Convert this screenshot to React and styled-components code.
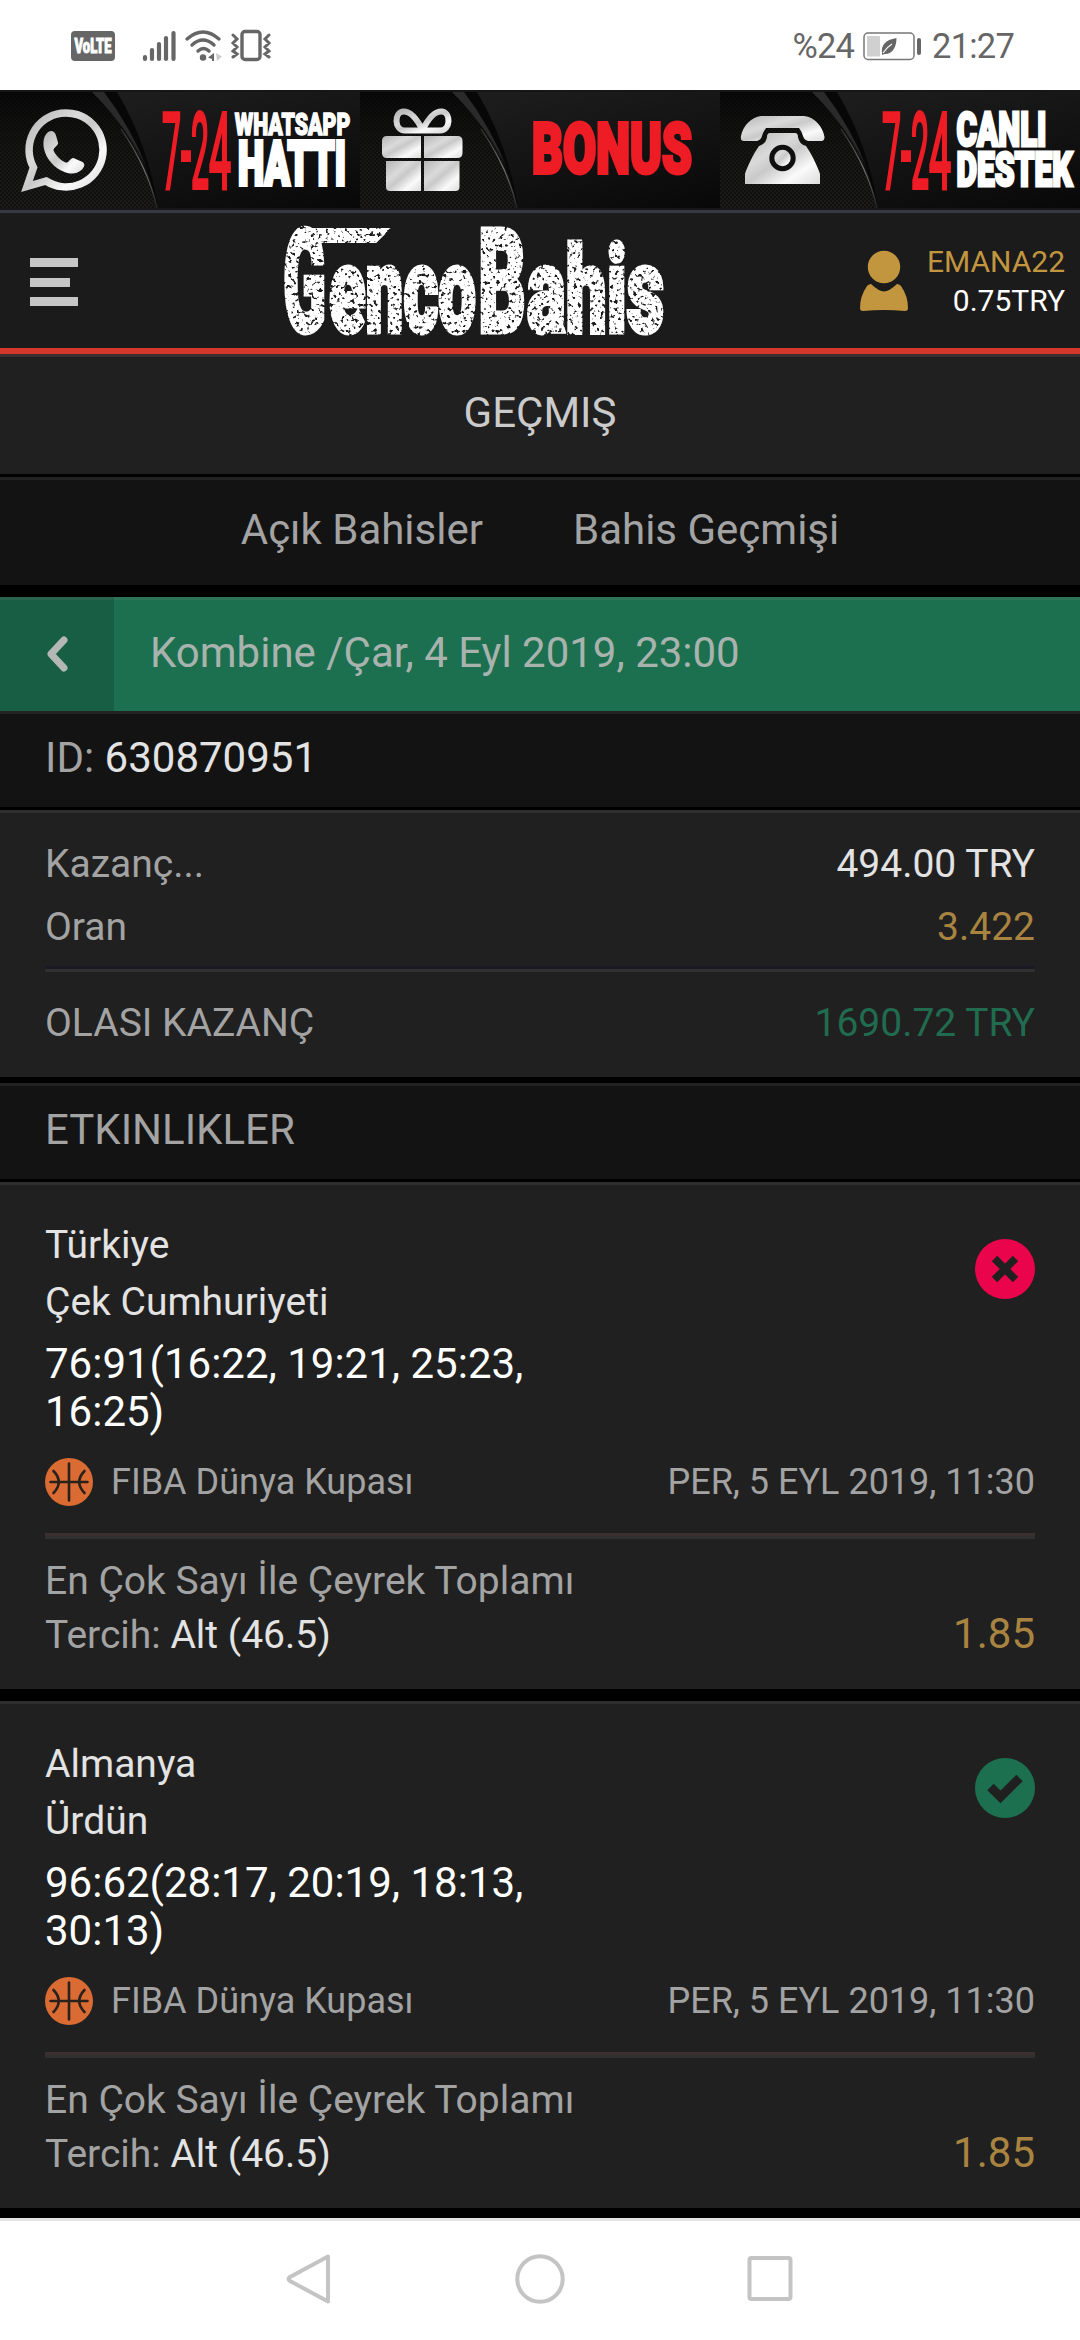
import React from "react";
import styled, { createGlobalStyle } from "styled-components";

const GlobalStyle = createGlobalStyle`
  body {
    margin: 0;
    background: #000;
    font-family: Roboto, "Liberation Sans", sans-serif;
    color: #a3a3a3;
  }
  svg {
    display: block;
    overflow: visible;
  }
`;

const Screen = styled.div`
  width: 1080px;
  height: 2340px;
  display: flex;
  flex-direction: column;
  overflow: hidden;
`;

const StatusBar = styled.div`
  box-sizing: border-box;
  height: 90px;
  flex: none;
  background: #fff;
  display: flex;
  justify-content: space-between;
  align-items: center;
  padding: 2px 66px 0 71px;
  color: #666;
  font-size: 34.5px;
  letter-spacing: -0.8px;

  .left,
  .right {
    display: flex;
    align-items: center;
  }
  .right {
    gap: 9px;
  }
`;

const Banner = styled.div`
  box-sizing: border-box;
  height: 123px;
  flex: none;
  display: flex;
  background: #161616;
  border-bottom: 3px solid #363842;
  padding-top: 2px;
`;

const Header = styled.header`
  box-sizing: border-box;
  height: 141px;
  flex: none;
  display: grid;
  grid-template-columns: 282px 384px 1fr;
  align-items: center;
  background: #1b1b1b;
  border-bottom: 6px solid #d6372b;
  padding-right: 15px;
`;

const MenuButton = styled.div`
  display: flex;
  flex-direction: column;
  gap: 10.5px;
  padding: 3px 0 0 30px;

  span {
    width: 48px;
    height: 9px;
    background: #c6c6c6;
  }
  .short {
    width: 40px;
  }
`;

const Account = styled.div`
  display: flex;
  justify-content: flex-end;
  align-items: center;
  gap: 19px;
  font-size: 30px;
  line-height: 39px;
  text-align: right;
  color: #fff;

  .name {
    color: #c2963f;
  }
`;

const PageTitle = styled.div`
  box-sizing: border-box;
  height: 123px;
  flex: none;
  display: flex;
  align-items: center;
  justify-content: center;
  background: #202020;
  border-top: 3px solid #3c2f2f;
  border-bottom: 3px solid #000;
  padding-bottom: 6px;
  font-size: 42px;
  color: #cbcbcb;
`;

const Tabs = styled.div`
  box-sizing: border-box;
  height: 120px;
  flex: none;
  display: flex;
  align-items: center;
  justify-content: center;
  gap: 90px;
  background: #131313;
  border-top: 3px solid #222;
  border-bottom: 12px solid #000;
  padding-bottom: 6px;
  font-size: 42px;
`;

const CouponBar = styled.div`
  box-sizing: border-box;
  height: 114px;
  flex: none;
  display: flex;
  background: #1c7050;
  box-shadow: inset 0 3px 0 #2c7458;
  font-size: 42px;
  color: #a9b3ae;
`;

const BackButton = styled.div`
  width: 114px;
  display: flex;
  align-items: center;
  justify-content: center;
  background: #185e44;
  box-shadow: inset 0 3px 0 #2b644e;
`;

const CouponTitle = styled.div`
  display: flex;
  align-items: center;
  padding: 0 0 3px 36px;
`;

const DarkStrip = styled.div`
  box-sizing: border-box;
  height: 99px;
  flex: none;
  display: flex;
  align-items: center;
  background: #131313;
  border-top: 3px solid #222;
  border-bottom: 3px solid #000;
  padding: 0 45px 6px;
  font-size: 42px;
  white-space: pre;

  b {
    font-weight: 400;
    color: #e3e3e3;
  }
`;

const Summary = styled.div`
  box-sizing: border-box;
  height: 273px;
  flex: none;
  background: #202020;
  border-top: 3px solid #2e2e2e;
  border-bottom: 6px solid #000;
  padding: 20px 45px 0;
`;

const SummaryRow = styled.div`
  display: flex;
  justify-content: space-between;
  font-size: 39px;
  line-height: 63px;

  span:last-child {
    color: ${(props) => props.$color};
  }
`;

const Divider = styled.div`
  height: 3px;
  background: ${(props) => props.$color};
  border-bottom: 3px solid #303030;
  margin: ${(props) => props.$margin};
`;

const EventCard = styled.div`
  box-sizing: border-box;
  height: 519px;
  flex: none;
  background: #202020;
  border-top: 3px solid #2e2e2e;
  border-bottom: 12px solid #000;
  padding: 32px 45px 0;
  font-size: 39px;
`;

const EventTop = styled.div`
  display: flex;
  justify-content: space-between;
  color: #e3e3e3;

  .teams {
    width: 500px;
    line-height: 57px;
  }
  .score {
    margin-top: 9px;
    font-size: 42px;
    line-height: 48px;
    color: #fff;
  }
  svg {
    margin-top: 22px;
  }
`;

const League = styled.div`
  display: flex;
  align-items: center;
  height: 48px;
  margin-top: 22px;
  font-size: 36px;

  .title {
    flex: 1;
    padding-left: 18px;
  }
`;

const Market = styled.div`
  line-height: 54px;
`;

const Pick = styled.div`
  display: flex;
  justify-content: space-between;
  align-items: baseline;
  line-height: 52px;

  b {
    font-weight: 400;
    color: #e3e3e3;
  }
  .odd {
    font-size: 42px;
    color: #a98440;
  }
`;

const NavBar = styled.div`
  box-sizing: border-box;
  height: 122px;
  margin-top: -2px;
  flex: none;
  position: relative;
  display: flex;
  align-items: center;
  justify-content: center;
  gap: 180px;
  background: #fff;
  border-top: 3px solid #e3e3e3;
  padding-bottom: 3px;
`;

// text squeezed into a box: x / bottom / width / cap height
function FitText({ x, y, w, h, stroke = 0, weight = 900, fill, children }) {
  return (
    <text
      x={x + stroke / 2}
      y={y - stroke / 2}
      fontFamily="Roboto, sans-serif"
      fontWeight={weight}
      fontSize={(h - stroke) / 0.711}
      textLength={w - stroke}
      lengthAdjust="spacingAndGlyphs"
      letterSpacing="0"
      fill={fill}
      stroke={fill}
      strokeWidth={stroke}
    >
      {children}
    </text>
  );
}

function StatusIcons() {
  return (
    <svg width="204" height="34" viewBox="0 0 204 34">
      <rect y="2" width="44" height="30" rx="4" fill="#666" />
      <FitText x={3} y={24.5} w={38} h={15} stroke={1} fill="#fff">
        VoLTE
      </FitText>
      <g stroke="#666" strokeWidth="4.2" strokeLinecap="round" fill="none">
        <path d="M74 28v2M81 21v9M88 15v15M95 9v21M102.500 4v26" />
        <path d="M116 10q16 -14 32 0M121 16q11 -10 22 0M127 22q5.500 -5 11 0" strokeWidth="3.400" />
        <rect x="171" y="2.500" width="18" height="28" rx="3" strokeWidth="3.400" />
        <path
          d="M162 6l4 4l-4 4l4 4l-4 4l4 3l-4 3M198 6l-4 4l4 4l-4 4l4 4l-4 3l4 3"
          strokeWidth="3"
        />
      </g>
      <circle cx="132" cy="28.500" r="3.200" fill="#666" />
      <path d="M143 24v8h-2v-2l-4 -1.500z" fill="#666" />
      <path d="M145 24l6 3.500l-5 4.500z" fill="#ccc" />
    </svg>
  );
}

function BatteryIcon() {
  return (
    <svg width="60" height="30" viewBox="0 0 60 30">
      <rect x="1" y="2" width="50" height="26.500" rx="4" fill="none" stroke="#777" strokeWidth="1.500" />
      <rect x="4" y="5" width="13" height="20.500" rx="1" fill="#d0d0d0" />
      <path d="M19 23c-1-9 3-14 14.500-16c0 9-4 16.500-12 16l-2 1z" fill="#666" />
      <path d="M20 22q4-6 9-9" stroke="#fff" strokeWidth="1.200" fill="none" />
      <rect x="54" y="7" width="4" height="17" rx="2" fill="#666" />
    </svg>
  );
}

function BannerDefs() {
  return (
    <defs>
      <pattern id="carbon" width="4" height="4" patternUnits="userSpaceOnUse">
        <rect width="4" height="4" fill="#0b0b0b" />
        <rect width="2" height="2" fill="#1c1b1a" />
        <rect x="2" y="2" width="2" height="2" fill="#1c1b1a" />
      </pattern>
      <linearGradient id="carbonShade" x1="0" y1="0" x2="0" y2="1">
        <stop offset="0" stopColor="#050505" stopOpacity=".8" />
        <stop offset="1" stopColor="#1c1c1a" stopOpacity=".25" />
      </linearGradient>
      <linearGradient id="panel" x1="0.300" y1="0" x2="1" y2="1">
        <stop offset="0" stopColor="#1e1e1e" />
        <stop offset="1" stopColor="#080808" />
      </linearGradient>
      <linearGradient id="edge" x1="0" y1="0" x2="0" y2="1">
        <stop offset="0" stopColor="#333" />
        <stop offset=".5" stopColor="#777" />
        <stop offset="1" stopColor="#222" />
      </linearGradient>
      <linearGradient id="silver" x1="0" y1="0" x2="1" y2="1">
        <stop offset="0" stopColor="#b5b5b5" />
        <stop offset=".35" stopColor="#dadada" />
        <stop offset=".5" stopColor="#c9c9c9" />
        <stop offset=".75" stopColor="#fafafa" />
        <stop offset="1" stopColor="#dcdcdc" />
      </linearGradient>
    </defs>
  );
}

function BannerTile({ icon, children }) {
  return (
    <svg width="360" height="116" viewBox="0 0 360 116">
      <BannerDefs />
      <rect width="360" height="116" fill="url(#panel)" />
      <path d="M0 0H94Q142 48 158 116H0z" fill="url(#carbon)" />
      <path d="M0 0H94Q142 48 158 116H0z" fill="url(#carbonShade)" />
      <path d="M103 0H117Q148 52 158 116Q143 52 103 0z" fill="#070707" />
      <path d="M92 0H104Q130 34 148 78Q128 36 92 0z" fill="#2a2a2a" />
      <path d="M121 37Q148 76 157 116" fill="none" stroke="url(#edge)" strokeWidth="1.200" />
      {icon}
      {children}
    </svg>
  );
}

function AllDay() {
  return (
    <text
      y="95.500"
      fontFamily="Roboto, sans-serif"
      fontWeight="400"
      fontSize="106"
      fill="#ee1c25"
      stroke="#ee1c25"
      strokeWidth="4"
    >
      <tspan x="162" textLength="19" lengthAdjust="spacingAndGlyphs">7</tspan>
      <tspan x="181" textLength="10" lengthAdjust="spacingAndGlyphs">-</tspan>
      <tspan x="191" textLength="18" lengthAdjust="spacingAndGlyphs">2</tspan>
      <tspan x="209" textLength="22" lengthAdjust="spacingAndGlyphs">4</tspan>
    </text>
  );
}

const whatsappIcon = (
  <g>
    <path
      d="M27 94.500L33.500 75.500A37 37 0 1 1 46 89z"
      fill="none"
      stroke="url(#silver)"
      strokeWidth="7.500"
      strokeLinejoin="miter"
    />
    <path
      d="M49 39.500c3-1.500 6 0 7 4l2 7c1 3-5 5-4.500 8c3 6 7 9.500 12 12c3 1 5-5 8-4.500l9 4c3 2 2 5-1 8c-5 4-10 4.500-17 2c-11-4.500-18-13-20.500-23c-1.500-8 0-14.500 5-17.500z"
      fill="url(#silver)"
    />
  </g>
);

const giftIcon = (
  <g>
    <path
      d="M62.500 38C56 25 50 19 43 19.500C34 20.500 34 38.500 45 38.500H80C91 38.500 91 20.500 82 19.500C75 19 69 25 62.500 38z"
      fill="none"
      stroke="url(#silver)"
      strokeWidth="6"
      strokeLinejoin="round"
    />
    <g fill="url(#silver)">
      <path d="M27 44H61V66H27q-5 0-5-5V49q0-5 5-5z" />
      <path d="M64 44H97.500q5 0 5 5V61q0 5-5 5H64z" />
      <path d="M26 69H61V99H30q-4 0-4-4z" />
      <path d="M64 69H99.500V95q0 4-4 4H64z" />
    </g>
  </g>
);

const phoneIcon = (
  <g>
    <path
      d="M41 24H84C95 25 103 35 104.500 45q0 4-3 4H88q-4-1-5-5t-4-8H46q-3 4-4 8t-5 5H24q-4 0-3-5C23 34 31 25 41 24z"
      fill="url(#silver)"
    />
    <path
      d="M50 41H75q3 0 3 4q1 7 8 9C91 61 98 75 100 82V92H25V82C27 75 34 61 39 54q7-2 8-9q0-4 3-4z"
      fill="url(#silver)"
    />
    <circle cx="62.500" cy="66" r="10.700" fill="url(#silver)" stroke="#0f0f0f" strokeWidth="5" />
  </g>
);

function Logo() {
  return (
    <svg width="384" height="114" viewBox="282 224 384 114">
      <defs>
        <filter id="grunge" x="-5%" y="-5%" width="110%" height="110%">
          <feTurbulence type="fractalNoise" baseFrequency=".27" numOctaves="2" seed="7" result="noise" />
          <feColorMatrix
            in="noise"
            type="matrix"
            values="0 0 0 0 0  0 0 0 0 0  0 0 0 0 0  8 0 0 0 -2.4"
            result="holes"
          />
          <feComposite in="SourceGraphic" in2="holes" operator="in" />
        </filter>
      </defs>
      <g
        filter="url(#grunge)"
        fill="#fff"
        stroke="#fff"
        fontFamily="Roboto, sans-serif"
        fontWeight="900"
      >
        <path d="M300 231H384L375 240H298z" strokeWidth="6" />
        <text y="331.500" strokeWidth="5">
          <tspan x="283" fontSize="143" textLength="43" lengthAdjust="spacingAndGlyphs">G</tspan>
          <tspan x="329" fontSize="120" textLength="147" lengthAdjust="spacingAndGlyphs">enco</tspan>
          <tspan x="478" fontSize="145" textLength="48" lengthAdjust="spacingAndGlyphs">B</tspan>
          <tspan x="527" fontSize="120" textLength="137" lengthAdjust="spacingAndGlyphs">ahis</tspan>
        </text>
      </g>
    </svg>
  );
}

function UserIcon() {
  return (
    <svg width="48" height="62" viewBox="0 0 48 62">
      <g fill="#c2963f">
        <ellipse cx="24" cy="17" rx="16.200" ry="16.300" />
        <path d="M11 34q8 7.500 13 7.500T37 34q2 0 4 2q7 10 7 22q0 3-3 3q-21-2-42 0q-3 0-3-3q0-12 7-22q2-2 4-2z" />
      </g>
    </svg>
  );
}

function BallIcon() {
  return (
    <svg width="48" height="48" viewBox="0 0 48 48">
      <circle cx="24" cy="24" r="24" fill="#d96b33" />
      <path
        d="M24 5.500V42.500M5.500 24H42.500M8.500 13Q19 24 8.500 35M39.500 13Q29 24 39.500 35"
        fill="none"
        stroke="#2a211d"
        strokeWidth="2.600"
        strokeLinecap="round"
      />
    </svg>
  );
}

function ResultIcon({ won }) {
  return (
    <svg width="60" height="60" viewBox="0 0 60 60">
      <circle cx="30" cy="30" r="30" fill={won ? "#1c7050" : "#e9044c"} />
      <path
        d={won ? "M15.500 29L25.500 39L44.500 20" : "M19.500 19.500L40.500 40.500M40.500 19.500L19.500 40.500"}
        fill="none"
        stroke="#202020"
        strokeWidth={won ? 9 : 7.5}
      />
    </svg>
  );
}

const events = [
  {
    home: "Türkiye",
    away: "Çek Cumhuriyeti",
    score: "76:91(16:22, 19:21, 25:23, 16:25)",
    won: false,
  },
  {
    home: "Almanya",
    away: "Ürdün",
    score: "96:62(28:17, 20:19, 18:13, 30:13)",
    won: true,
  },
];

function App() {
  return (
    <Screen>
      <GlobalStyle />
      <StatusBar>
        <div className="left">
          <StatusIcons />
        </div>
        <div className="right">
          <span>%24</span>
          <BatteryIcon />
          <span>21:27</span>
        </div>
      </StatusBar>

      <Banner>
        <BannerTile icon={whatsappIcon}>
          <AllDay />
          <FitText x={234} y={44} w={117} h={24} stroke={1.5} fill="#fff">WHATSAPP</FitText>
          <FitText x={236} y={95} w={112} h={47} stroke={4} fill="#fff">HATTI</FitText>
        </BannerTile>
        <BannerTile icon={giftIcon}>
          <FitText x={170} y={83} w={164} h={54} stroke={4} fill="#ee1c25">BONUS</FitText>
        </BannerTile>
        <BannerTile icon={phoneIcon}>
          <AllDay />
          <FitText x={235} y={55} w={93} h={37} stroke={3} fill="#fff">CANLI</FitText>
          <FitText x={235} y={95} w={119} h={37} stroke={3} fill="#fff">DESTEK</FitText>
        </BannerTile>
      </Banner>

      <Header>
        <MenuButton>
          <span />
          <span className="short" />
          <span />
        </MenuButton>
        <Logo />
        <Account>
          <UserIcon />
          <div>
            <div className="name">EMANA22</div>
            <div>0.75TRY</div>
          </div>
        </Account>
      </Header>

      <PageTitle>GEÇMIŞ</PageTitle>
      <Tabs>
        <span>Açık Bahisler</span>
        <span>Bahis Geçmişi</span>
      </Tabs>

      <CouponBar>
        <BackButton>
          <svg width="22" height="36" viewBox="0 0 22 36">
            <path
              d="M18 4L5 18L18 32"
              fill="none"
              stroke="#b3b7b5"
              strokeWidth="7"
              strokeLinecap="round"
              strokeLinejoin="round"
            />
          </svg>
        </BackButton>
        <CouponTitle>Kombine /Çar, 4 Eyl 2019, 23:00</CouponTitle>
      </CouponBar>
      <DarkStrip>
        ID: <b>630870951</b>
      </DarkStrip>

      <Summary>
        <SummaryRow $color="#e3e3e3">
          <span>Kazanç...</span>
          <span>494.00 TRY</span>
        </SummaryRow>
        <SummaryRow $color="#a98440">
          <span>Oran</span>
          <span>3.422</span>
        </SummaryRow>
        <Divider $color="#181924" $margin="7px 0 20px" />
        <SummaryRow $color="#216b50">
          <span>OLASI KAZANÇ</span>
          <span>1690.72 TRY</span>
        </SummaryRow>
      </Summary>
      <DarkStrip>ETKINLIKLER</DarkStrip>

      {events.map((event) => (
        <EventCard key={event.home}>
          <EventTop>
            <div className="teams">
              <div>{event.home}</div>
              <div>{event.away}</div>
              <div className="score">{event.score}</div>
            </div>
            <ResultIcon won={event.won} />
          </EventTop>
          <League>
            <BallIcon />
            <span className="title">FIBA Dünya Kupası</span>
            <span>PER, 5 EYL 2019, 11:30</span>
          </League>
          <Divider $color="#3c2f2f" $margin="27px 0 15px" />
          <Market>En Çok Sayı İle Çeyrek Toplamı</Market>
          <Pick>
            <span>
              Tercih: <b>Alt (46.5)</b>
            </span>
            <span className="odd">1.85</span>
          </Pick>
        </EventCard>
      ))}

      <NavBar>
        <svg width="50" height="52" viewBox="0 0 50 52">
          <path d="M44 3.500V48.500L6 28Q3 26 6 24z" fill="none" stroke="#c4c4c4" strokeWidth="4" strokeLinejoin="round" />
        </svg>
        <svg width="52" height="52" viewBox="0 0 52 52">
          <circle cx="26" cy="26" r="22.700" fill="none" stroke="#c4c4c4" strokeWidth="4" />
        </svg>
        <svg width="50" height="52" viewBox="0 0 50 52">
          <rect x="3.500" y="5" width="41" height="41" rx="2" fill="none" stroke="#c4c4c4" strokeWidth="4" />
        </svg>
      </NavBar>
    </Screen>
  );
}

export default App;
